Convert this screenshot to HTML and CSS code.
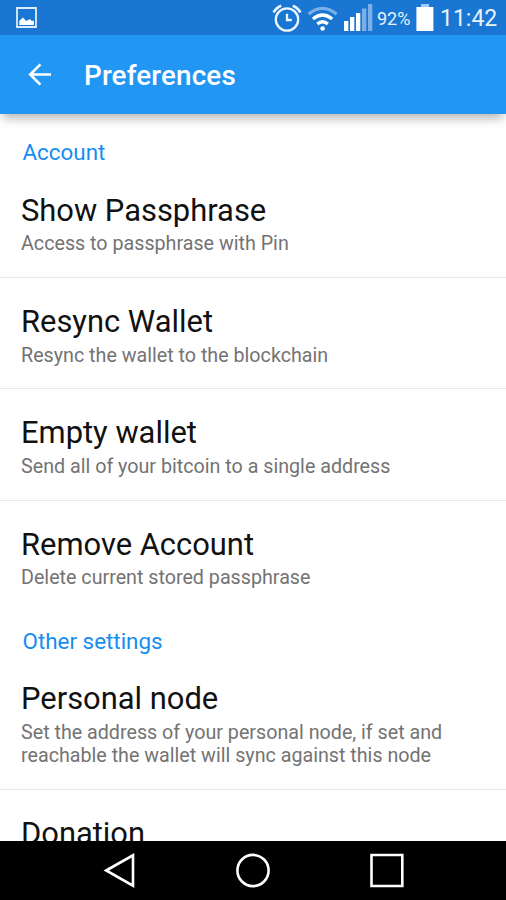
FILE: index.html
```html
<!DOCTYPE html>
<html lang="en">
<head>
<meta charset="utf-8">
<title>Preferences</title>
<link rel="stylesheet" href="styles.css">
</head>
<body>
<div class="screen">
  <header class="status">
    <svg class="picture" width="21" height="21" viewBox="0 0 21 21"><path d="M1 1H20V20H1Z" fill="none" stroke="#dfedfb" stroke-width="1.8"/><path d="M3.3 18V14L6.8 10.4 8.5 12 10 14 14 12 15 13.5 17.9 14V18Z" fill="#fff"/></svg>
    <div class="indicators">
      <svg class="alarm" width="30" height="30" viewBox="0 0 30 30" fill="none" stroke="#eef6ff" stroke-width="2.3"><circle cx="15" cy="16.5" r="11.2"/><path d="M15 10.8V17H19.8"/><path d="M1.7 9.5Q4 4.7 9.2 2.7M20.8 2.7Q26 4.7 28.3 9.5" stroke-width="2.7"/></svg>
      <svg class="wifi" width="32" height="26" viewBox="0 0 32 26" fill="none" stroke="#fff" stroke-width="3.3"><path d="M1.6 8.1Q15.5-3.3 29.6 8.1" stroke="#7bb0e7"/><path d="M5.9 13Q15.5 5 25.2 13M10.3 17.9Q15.5 13.6 20.9 17.9"/><circle cx="15.6" cy="22.5" r="2.3" fill="#fff" stroke="none"/></svg>
      <svg class="signal" width="29" height="28" viewBox="0 0 29 28" fill="#fff"><path d="M0 17H4.3V27H0ZM6 13H10.3V27H6ZM12 9H16.3V27H12Z"/><path d="M18 4.5H22.3V27H18ZM24 0H28.3V27H24Z" fill="#7bb0e7"/></svg>
      <span class="percent">92%</span>
      <svg class="battery" width="18" height="28" viewBox="0 0 18 28"><path d="M5 0H13V3H5Z" fill="#a5caef"/><path d="M.4 3H17.4V27H.4Z" fill="#fff"/></svg>
      <time class="clock">11:42</time>
    </div>
  </header>
  <div class="toolbar">
    <svg class="back" width="24" height="24" viewBox="0 0 24 24" fill="none" stroke="#fff" stroke-width="2.6"><path d="M24 11.5H3.2M13.4 1.3 3.2 11.5 13.4 21.7"/></svg>
    <h1>Preferences</h1>
  </div>
  <main class="list">
    <section>
      <h2>Account</h2>
      <div class="row"><h3>Show Passphrase</h3><p>Access to passphrase with Pin</p></div>
      <div class="row"><h3>Resync Wallet</h3><p>Resync the wallet to the blockchain</p></div>
      <div class="row"><h3>Empty wallet</h3><p>Send all of your bitcoin to a single address</p></div>
      <div class="row"><h3>Remove Account</h3><p>Delete current stored passphrase</p></div>
    </section>
    <section>
      <h2>Other settings</h2>
      <div class="row"><h3>Personal node</h3><p>Set the address of your personal node, if set and<br>reachable the wallet will sync against this node</p></div>
      <div class="row"><h3>Donation</h3></div>
    </section>
  </main>
  <nav class="navbar">
    <svg width="34" height="36" viewBox="0 0 34 36"><path d="M3.2 17.5 30 2.3V32.7Z"/></svg>
    <svg width="36" height="36" viewBox="0 0 36 36"><circle cx="18" cy="17.5" r="15.6"/></svg>
    <svg width="36" height="36" viewBox="0 0 36 36"><path d="M2.5 2H33.3V33H2.5Z"/></svg>
  </nav>
</div>
</body>
</html>
```
FILE: styles.css
```css
* { box-sizing: border-box; margin: 0; padding: 0; }
body { background: #fff; font-family: Roboto, sans-serif; }
svg { display: block; flex: none; }
.screen { width: 506px; height: 900px; display: flex; flex-direction: column; overflow: hidden; }
.status { flex: none; height: 35px; padding-left: 16px; background: #1976d2; color: #e8f2fc; display: flex; justify-content: space-between; align-items: flex-start; }
.picture { margin-top: 7px; }
.indicators { display: flex; width: 234px; }
.alarm { margin: 3px 0 0 0; }
.wifi { margin: 6px 0 0 5px; }
.signal { margin: 4px 0 0 5px; }
.percent { width: 39px; margin-left: 4px; font-size: 18px; line-height: 37px; white-space: nowrap; }
.battery { margin-top: 4px; }
.clock { margin-left: 6px; font-size: 23px; line-height: 38px; }
.toolbar { flex: none; position: relative; height: 79px; padding-left: 27px; background: #2196f3; color: #fff; display: flex; align-items: center; box-shadow: 0 7px 10px -3px rgba(0, 0, 0, .3); }
.back { margin-top: 1px; }
h1 { margin: 2px 0 0 33px; font-size: 27.8px; font-weight: 500; line-height: 32px; letter-spacing: .15px; }
.list { flex: 1; min-height: 0; overflow: hidden; padding-top: 25px; }
h2 { height: 27px; padding-left: 22.5px; font-size: 22.4px; font-weight: 400; line-height: 27px; color: #168df0; }
.row { height: 111.4px; padding: 26.5px 21px 0; }
.row + .row { border-top: 1px solid #e9e9e9; padding-top: 25.8px; }
section + section { padding-top: 16.5px; }
.row:first-of-type { height: 111px; }
section + section .row:first-of-type { height: 134.2px; }
section + section .row + .row { padding-top: 26.2px; }
h3 { font-size: 30.9px; font-weight: 400; line-height: 36px; color: #111; }
p { margin-top: 3.9px; font-size: 19.7px; line-height: 23.2px; color: #737373; white-space: nowrap; }
.navbar { flex: none; height: 59px; padding: 12px 101px 0 103px; background: #000; display: flex; justify-content: space-between; }
.navbar svg { fill: none; stroke: #fff; stroke-width: 2.6; }
```
